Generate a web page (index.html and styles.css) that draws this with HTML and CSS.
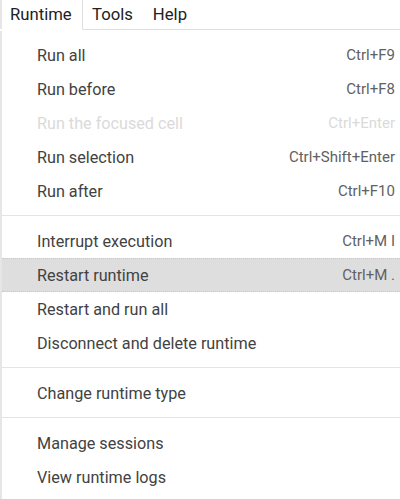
FILE: index.html
```html
<!DOCTYPE html>
<html>
<head>
<meta charset="utf-8">
<link rel="stylesheet" href="styles.css">
</head>
<body>
<div class="page">
  <div class="menubar">
    <div class="tab active">Runtime</div>
    <div class="tab tools">Tools</div>
    <div class="tab help">Help</div>
    <div class="bar-fill"></div>
  </div>
  <div class="dropdown">
    <div class="item"><span class="label">Run all</span><span class="key">Ctrl+F9</span></div>
    <div class="item"><span class="label">Run before</span><span class="key">Ctrl+F8</span></div>
    <div class="item disabled"><span class="label">Run the focused cell</span><span class="key">Ctrl+Enter</span></div>
    <div class="item"><span class="label">Run selection</span><span class="key">Ctrl+Shift+Enter</span></div>
    <div class="item"><span class="label">Run after</span><span class="key">Ctrl+F10</span></div>
    <div class="sep"></div>
    <div class="item"><span class="label">Interrupt execution</span><span class="key">Ctrl+M I</span></div>
    <div class="item hover"><span class="label">Restart runtime</span><span class="key">Ctrl+M .</span></div>
    <div class="item"><span class="label">Restart and run all</span></div>
    <div class="item"><span class="label">Disconnect and delete runtime</span></div>
    <div class="sep"></div>
    <div class="item"><span class="label">Change runtime type</span></div>
    <div class="sep"></div>
    <div class="item"><span class="label">Manage sessions</span></div>
    <div class="item"><span class="label">View runtime logs</span></div>
  </div>
</div>
</body>
</html>
```
FILE: styles.css
```css
html, body {
  margin: 0;
  padding: 0;
  background: #ffffff;
}
body {
  font-family: Roboto, "Liberation Sans", sans-serif;
  width: 400px;
  height: 499px;
  overflow: hidden;
}
.page {
  display: flex;
  flex-direction: column;
  height: 499px;
  border-left: 2px solid #e6e6e6;
  box-sizing: border-box;
}
.menubar {
  display: flex;
  height: 30px;
  flex: none;
  margin-left: -2px;
}
.tab {
  font-size: 16.7px;
  color: #202124;
  padding: 0 8px 0 10px;
  line-height: 30px;
  border-bottom: 2px solid #e0e0e0;
  box-sizing: border-box;
  height: 31px;
}
.tab.active {
  border-right: 1px solid #e0e0e0;
  border-bottom: 2px solid #ffffff;
  width: 83px;
}
.tab.tools {
  padding-left: 9px;
  padding-right: 9px;
}
.tab.help {
  padding-left: 11px;
}
.bar-fill {
  flex: 1;
  border-bottom: 2px solid #e0e0e0;
  height: 31px;
  box-sizing: border-box;
}
.dropdown {
  flex: 1;
  padding: 8px 0;
  background: #fff;
}
.item {
  display: flex;
  justify-content: space-between;
  align-items: center;
  height: 34px;
  padding: 0 5px 0 35px;
  font-size: 16.2px;
  color: #424242;
  box-sizing: border-box;
}
.item .key {
  color: #616161;
  font-size: 15px;
}
.item.disabled .label,
.item.disabled .key {
  color: #dadada;
}
.item.hover {
  background: #dedede;
  border-top: 1px dotted #c8c8c8;
  border-bottom: 1px dotted #c8c8c8;
}
.sep {
  height: 1px;
  background: #e4e4e4;
  margin: 7px 0 8px;
}
```
